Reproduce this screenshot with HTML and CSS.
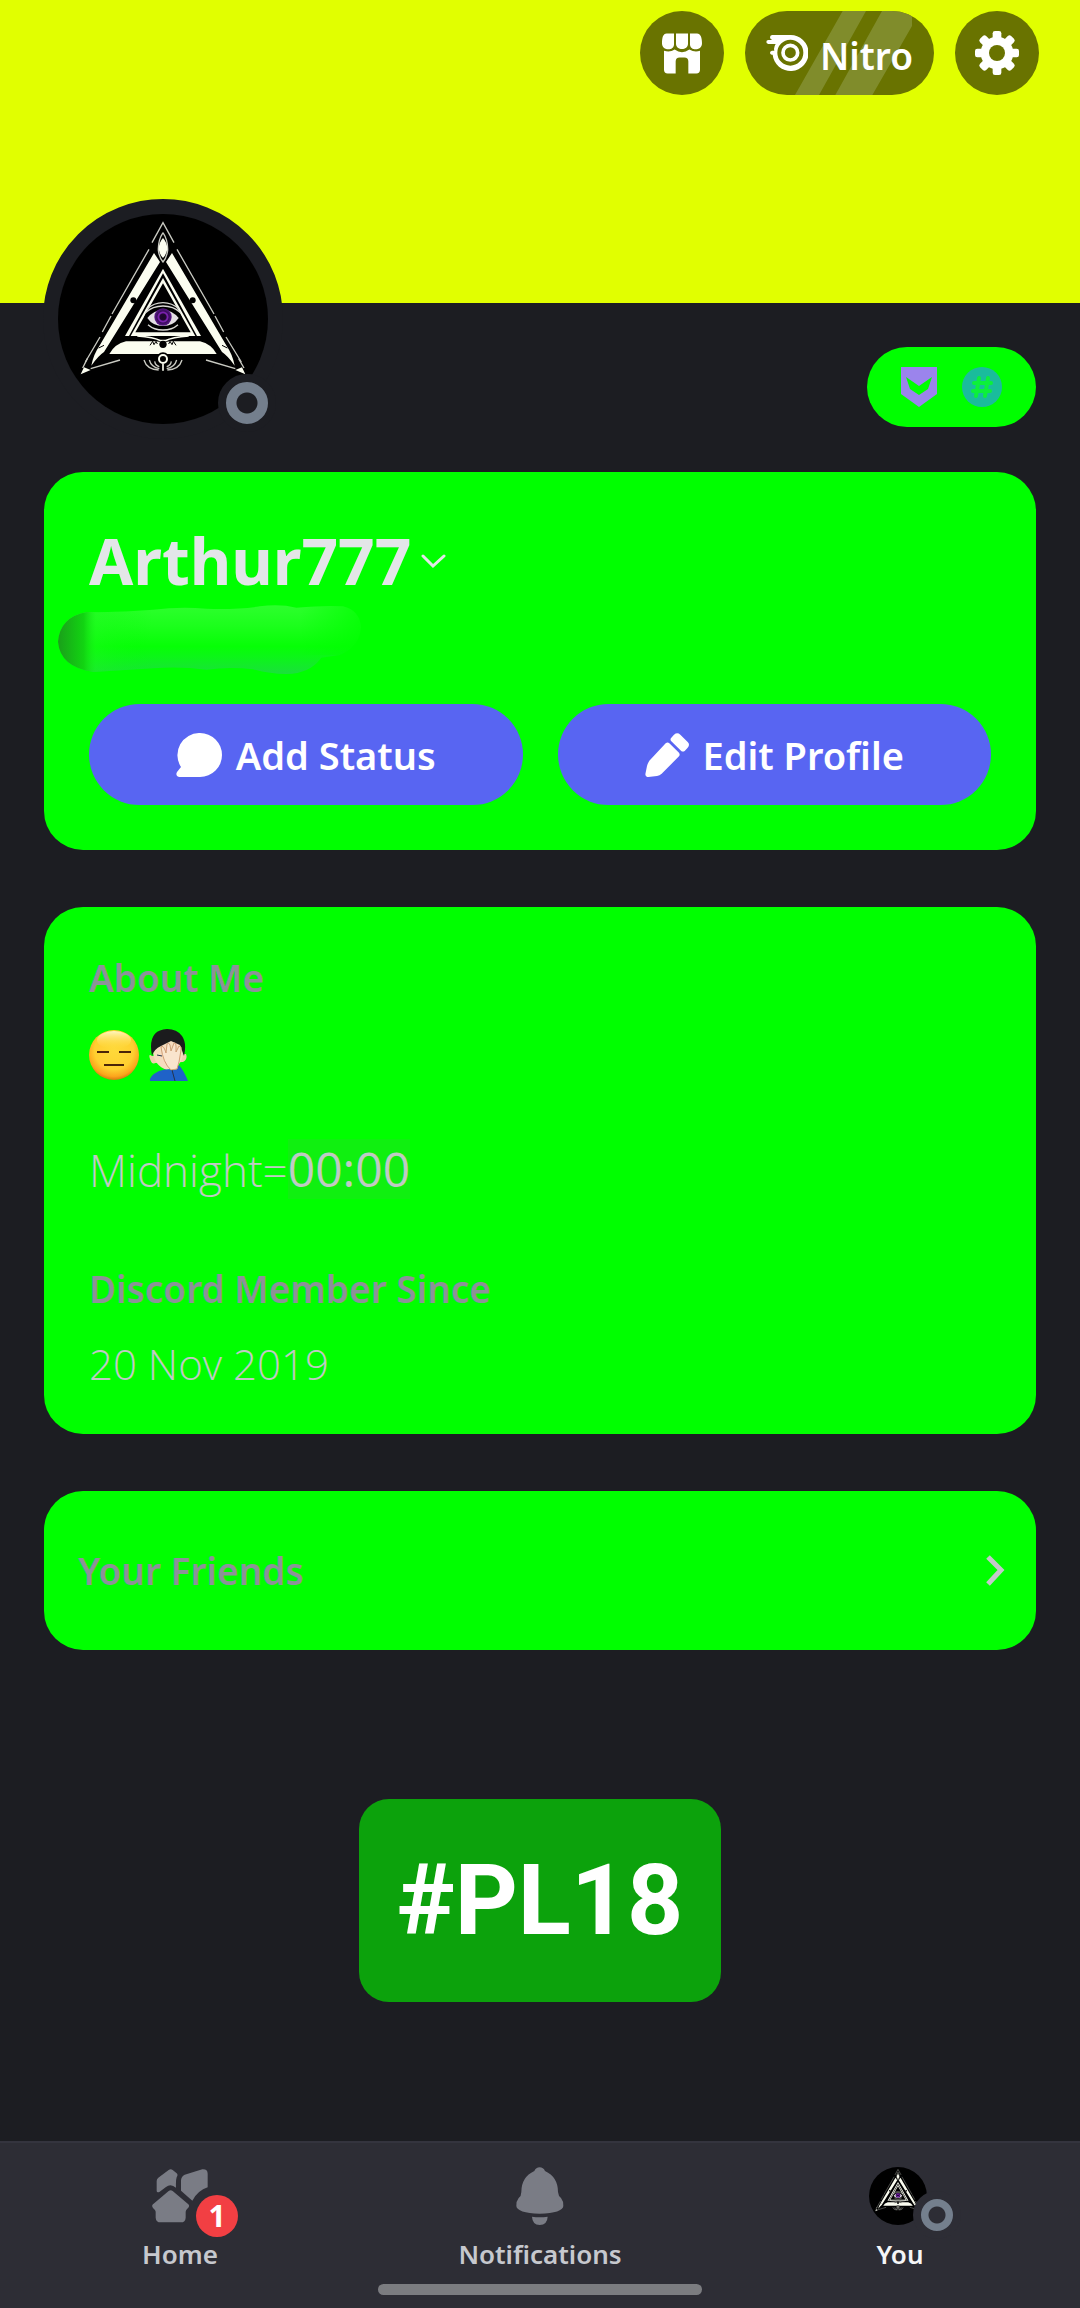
FILE: index.html
```html
<!DOCTYPE html>
<html lang="en">
<head>
<meta charset="utf-8">
<meta name="viewport" content="width=device-width, initial-scale=1">
<title>You</title>
<link rel="stylesheet" href="styles.css">
</head>
<body>
<svg class="sprite" aria-hidden="true">
  <defs>
    <radialGradient id="iris"><stop offset="0" stop-color="#1a0628"/><stop offset=".35" stop-color="#210733"/><stop offset=".5" stop-color="#7a1fb0"/><stop offset=".7" stop-color="#3a0c5c"/><stop offset="1" stop-color="#5c1a8a"/></radialGradient>
    <symbol id="avatar-art" viewBox="84 86 630 630">
      <circle cx="399" cy="401" r="315" fill="#000"/>
      <g fill="none" stroke="#c9cac2" stroke-width="4">
        <path d="M366 172 399 112 432 172"/>
        <path d="M357 192 246 386M243 392 217 440M210 455 166 530M441 192 552 386M555 392 581 440M588 455 634 530"/>
        <path d="M172 520 158 548M270 524 182 550M528 524 616 550M626 520 642 548"/>
        <path d="M399 142Q384 165 385 195 388 218 399 230 410 218 413 195 414 165 399 142"/>
        <path d="M342 524Q350 552 386 554M358 524Q364 546 388 550M374 528Q376 540 388 544M456 524Q448 552 412 554M440 524Q434 546 410 550M424 528Q422 540 410 544"/>
      </g>
      <g fill="#fbfdf0">
        <path d="M399 158Q412 172 412 192 408 210 399 218 390 210 386 192 386 172 399 158Z"/>
        <path d="M372 203 390 230 222 500Q204 512 184 541 190 508 208 482ZM426 203 408 230 576 500Q594 512 614 541 608 508 590 482Z"/>
        <path d="M288 468H510Q544 476 560 506H238Q254 476 288 468Z"/>
        <path d="M152 567 162 546 182 554ZM646 567 636 546 616 554Z"/>
      </g>
      <path d="M399 250 285 452H513Z" fill="#fbfdf0"/>
      <path d="M399 264 297 452H501Z" fill="#000"/>
      <path d="M399 278 302 452H496Z" fill="#fbfdf0"/>
      <path d="M399 294 316 441H482Z" fill="#000"/>
      <path d="M320 452H478L399 472Z" fill="#000"/>
      <path d="M322 452Q372 456 392 466H406Q426 456 476 452" fill="none" stroke="#fbfdf0" stroke-width="5"/>
      <path d="M342 398Q350 366 399 362 448 366 456 398 444 432 399 434 354 432 342 398Z" fill="#000"/>
      <path d="M350 372Q372 352 399 352 426 352 448 372M346 382Q368 362 399 362 430 362 452 382M354 418Q372 434 399 434 426 434 444 418" fill="none" stroke="#d9d9d4" stroke-width="4"/>
      <path d="M352 398Q372 374 399 374 426 374 446 398 430 422 399 422 368 422 352 398Z" fill="#e4e0e4"/>
      <circle cx="399" cy="395" r="26" fill="url(#iris)"/>
      <circle cx="399" cy="395" r="14" fill="none" stroke="#7a22ac" stroke-width="4"/>
      <g fill="#000"><circle cx="310" cy="345" r="9"/><circle cx="488" cy="345" r="9"/><circle cx="399" cy="477" r="11"/></g>
      <path d="M360 480 368 468 372 478 378 468 382 476M438 480 430 468 426 478 420 468 416 476M206 488 222 480M592 488 576 480" fill="none" stroke="#000" stroke-width="3"/>
      <circle cx="399" cy="521" r="20" fill="#000"/>
      <circle cx="399" cy="521" r="12" fill="none" stroke="#fbfdf0" stroke-width="6"/>
      <path d="M399 536V556" stroke="#fbfdf0" stroke-width="5"/>
    </symbol>
  </defs>
</svg>

<header class="banner">
  <button class="chip" aria-label="Shop">
    <svg width="40" height="41" viewBox="126 98 120 122" fill="#fff">
      <path d="M140 99H162V132C162 152 126 152 126 128 126 112 129 99 140 99ZM168 99H204V130C204 151 168 151 168 130ZM210 99H231C242 99 246 112 246 128 246 152 210 152 210 132Z"/>
      <path d="M132 151Q150 157 164 147 186 163 208 147 224 157 240 151V208Q240 219 229 219H205V183Q205 171 193 171H179Q167 171 167 183V219H143Q132 219 132 208Z"/>
    </svg>
  </button>
  <button class="chip chip-nitro">
    <svg class="shine" viewBox="375 33 567 252" aria-hidden="true"><path d="M668 33H738L597 285H525ZM786 33H876V78L757 285H646Z" fill="#808c2b"/></svg>
    <svg class="nitro-icon" width="42" height="36" viewBox="441 105 126 108" aria-hidden="true">
      <path fill="#fff" fill-rule="evenodd" d="M459 105H514A54 54 0 1 1 461 164H458Q453 163 453 158 453 153 459 152H466Q463 143 470 132H448Q442 131 442 126 442 120 448 120H460Q453 118 453 112 453 106 459 105ZM514 119A39 39 0 1 0 514 197 39 39 0 1 0 514 119Z"/>
      <circle cx="514" cy="158" r="22" fill="none" stroke="#fff" stroke-width="11"/>
    </svg>
    <span class="nitro-label">Nitro</span>
  </button>
  <button class="chip" aria-label="Settings">
    <svg width="44" height="44" viewBox="-66 -66 132 132">
      <g fill="#fff">
        <circle r="49"/>
        <g><rect x="-13" y="-66" width="26" height="132" rx="7"/><rect x="-66" y="-13" width="132" height="26" rx="7"/></g>
        <g transform="rotate(45)"><rect x="-13" y="-66" width="26" height="132" rx="7"/><rect x="-66" y="-13" width="132" height="26" rx="7"/></g>
      </g>
      <circle r="24" fill="#697300"/>
    </svg>
  </button>
</header>

<main class="profile">
  <div class="identity">
    <div class="avatar">
      <svg class="avatar-img" role="img" aria-label="Avatar"><use href="#avatar-art"/></svg>
      <span class="status"></span>
    </div>
    <div class="badges">
      <svg width="36" height="40" viewBox="0 0 36 40" role="img" aria-label="HypeSquad"><path fill="#9b84ec" fill-rule="evenodd" d="M0 0H36V27L18 40 0 27ZM5 10 9 22 18 28 27 22 31 10 18 19Z"/></svg>
      <svg width="40" height="40" viewBox="0 0 40 40" role="img" aria-label="Legacy username"><circle cx="20" cy="20" r="20" fill="#1abc9c"/><path d="M17 11 14 29M26 11 23 29M12 16H29M11 24H28" stroke="#0cf03a" stroke-width="4" fill="none" stroke-linecap="round"/></svg>
    </div>
  </div>

  <section class="card">
    <h1 class="name">Arthur777
      <svg width="25" height="15" viewBox="0 0 25 15" aria-hidden="true"><path d="M2 2 12 12 23 2" fill="none" stroke="#e3e6e8" stroke-width="3" stroke-linecap="round"/></svg>
    </h1>
    <svg class="smudge" viewBox="54 314 910 207" aria-hidden="true">
      <defs>
        <linearGradient id="edge" gradientUnits="userSpaceOnUse" x1="54" x2="340" y1="0" y2="0"><stop offset="0" stop-color="#1aa01a"/><stop offset=".27" stop-color="#12d412"/><stop offset=".4" stop-color="#1cf81c" stop-opacity=".4"/><stop offset="1" stop-color="#0f0" stop-opacity="0"/></linearGradient>
        <linearGradient id="body" x2="0" y2="1"><stop offset="0" stop-color="#2dff2d"/><stop offset=".3" stop-color="#1cff1c"/><stop offset=".6" stop-color="#06ff06"/><stop offset=".75" stop-color="#0cf618"/><stop offset="1" stop-color="#1ae03c"/></linearGradient>
        <linearGradient id="fade"><stop offset="0" stop-color="#0f0" stop-opacity="0"/><stop offset="1" stop-color="#0f0" stop-opacity=".75"/></linearGradient>
      </defs>
      <path id="blob" fill="url(#body)" d="M140 335Q240 337 340 328 420 318 500 325 590 328 660 318 720 310 770 322 860 314 910 318 960 330 964 380 960 440 900 464L845 472Q810 520 740 521 690 521 640 507 570 498 500 508 420 498 340 504L160 515Q60 500 54 424 60 350 140 335Z"/>
      <path fill="url(#edge)" d="M140 335Q240 337 340 328V504L160 515Q60 500 54 424 60 350 140 335Z"/>
      <rect x="780" y="314" width="184" height="150" fill="url(#fade)"/>
    </svg>
    <div class="actions">
      <button class="action">
        <svg width="46" height="44" viewBox="0 0 46 44" aria-hidden="true"><path fill="#fff" d="M24 0A22 22 0 0 1 24 44H3Q-1 43 1 39L5 34A22 22 0 0 1 24 0Z"/></svg>
        Add Status
      </button>
      <button class="action">
        <svg width="44" height="44" viewBox="48 53 132 132" aria-hidden="true"><g fill="#fff"><path d="M135 58Q145 50 154 58L176 80Q184 88 176 97L167 107Q161 111 156 106L127 78Q122 72 127 67Z"/><path d="M110 84Q116 79 121 84L150 112Q154 118 150 123L98 175Q92 181 84 182L58 185Q49 186 49 177L54 152Q56 144 61 136Z"/></g></svg>
        Edit Profile
      </button>
    </div>
  </section>

  <section class="card">
    <h2 class="heading">About Me</h2>
    <p class="emoji">
      <svg width="50" height="52" viewBox="0 0 50 52" role="img" aria-label="Expressionless face">
        <defs>
          <radialGradient id="face" cx=".5" cy=".4" r=".6"><stop offset="0" stop-color="#ffd93a"/><stop offset=".65" stop-color="#ffcf30"/><stop offset=".88" stop-color="#fca51c"/><stop offset="1" stop-color="#d87a10"/></radialGradient>
          <linearGradient id="gloss" x2="0" y2="1"><stop offset="0" stop-color="#fff6c0"/><stop offset="1" stop-color="#ffdc40" stop-opacity="0"/></linearGradient>
        </defs>
        <circle cx="25" cy="26" r="25" fill="url(#face)"/><ellipse cx="25" cy="11" rx="17" ry="9" fill="url(#gloss)"/>
        <path d="M8 23H20M30 23H42M15 36H35" stroke="#4a2508" stroke-width="2"/>
      </svg>
      <svg width="40" height="52" viewBox="0 0 40 52" role="img" aria-label="Facepalm">
        <path d="M3 27Q-1 24 1 30 3 36 6 34L34 33Q39 30 37 25" fill="#f0cfae"/>
        <path d="M4 22Q4 8 18 7 34 8 34 24 33 39 18 41 5 37 4 22Z" fill="#f6dcbf"/>
        <path d="M3 27Q-2 1 18 0 28 0 33 7 38 14 35 27L31 16 22 12 12 17Q5 20 3 27Z" fill="#1b1b1d"/>
        <path d="M1 52Q0 47 10 42 18 39 25 41L30 36Q35 42 39 52Z" fill="#1f62c8"/>
        <path d="M12 18Q14 16 16 21L17 24 18 15Q20 13 21 16L22 22 25 14Q27 13 27 17V23L30 17Q33 17 32 21L30 33 28 40 22 41Q14 34 12 18Z" fill="#f9e4cd" stroke="#cf9f76" stroke-width="1"/>
        <path d="M8 26 13 27M23 41 26 52" stroke="#24344f" stroke-width="1" fill="none"/>
      </svg>
    </p>
    <p class="bio">Midnight=<time class="stamp">00:00</time></p>
    <h2 class="heading since">Discord Member Since</h2>
    <p class="date">20 Nov 2019</p>
  </section>

  <a class="card friends" href="#friends">
    <span class="heading">Your Friends</span>
    <svg width="22" height="34" viewBox="0 0 22 34" aria-hidden="true"><path d="M4 3 17 16 4 30" fill="none" stroke="#c3c8ca" stroke-width="5"/></svg>
  </a>

  <div class="tag">#PL18</div>
</main>

<nav class="tabs">
  <a class="tab" href="#home">
    <span class="tab-icon">
      <svg width="56" height="54" viewBox="94 122 168 162" fill="#7a7c85" aria-hidden="true">
        <path d="M108 158Q108 152 113 148L144 125Q150 120 156 125L168 135Q173 139 168 147 165 155 166 178 150 164 136 176L116 191Q108 194 108 187Z"/>
        <path d="M181 156Q182 144 192 139L245 123Q261 122 261 136V177Q232 186 215 217L181 187Z"/>
        <path d="M144 188Q150 183 156 188L203 228Q209 234 200 241 196 244 195 250V268Q194 282 181 282H120Q106 282 105 268V250Q104 244 99 241 91 234 97 228Z"/>
      </svg>
      <span class="count">1</span>
    </span>
    Home
  </a>
  <a class="tab" href="#notifications">
    <span class="tab-icon">
      <svg width="48" height="58" viewBox="1190 115 144 174" fill="#7a7c85" aria-hidden="true">
        <path d="M1245 127Q1250 116 1261 116 1272 116 1277 127 1316 145 1316 190 1317 202 1325 208 1333 218 1332 232 1330 253 1261 255 1193 253 1191 232 1190 218 1198 208 1206 202 1206 190 1206 145 1245 127Z"/>
        <path d="M1238 264Q1261 267 1285 264 1284 288 1261 289 1239 288 1238 264Z"/>
      </svg>
    </span>
    Notifications
  </a>
  <a class="tab tab-current" href="#you" aria-current="page">
    <span class="tab-icon">
      <svg class="tab-avatar" role="img" aria-label="Avatar"><use href="#avatar-art"/></svg>
      <span class="status status-small"></span>
    </span>
    You
  </a>
  <span class="grip"></span>
</nav>
</body>
</html>
```
FILE: styles.css
```css
* {
  box-sizing: border-box;
}

body {
  margin: 0;
  min-height: 100vh;
  display: flex;
  flex-direction: column;
  background: #1c1d22;
  color: #fff;
  font-family: "Noto Sans", sans-serif;
}

h1, h2, p {
  margin: 0;
}

button {
  border: 0;
  padding: 0;
  color: inherit;
  font: inherit;
}

a {
  color: inherit;
  text-decoration: none;
}

svg {
  display: block;
  flex: none;
}

.sprite {
  position: absolute;
  width: 0;
  height: 0;
}

/* Banner */

.banner {
  height: 303px;
  padding: 11px 41px;
  display: flex;
  justify-content: flex-end;
  align-items: flex-start;
  gap: 21px;
  background: #e1ff00;
}

.chip {
  width: 84px;
  height: 84px;
  border-radius: 42px;
  display: flex;
  align-items: center;
  justify-content: center;
  background: #697300;
}

.chip-nitro {
  position: relative;
  width: 189px;
  gap: 12px;
  overflow: hidden;
  font-size: 37px;
  font-weight: 600;
}

.shine {
  position: absolute;
  inset: 0;
  width: 100%;
  height: 100%;
}

.nitro-icon,
.nitro-label {
  position: relative;
}

.nitro-label {
  padding-top: 4px;
}

/* Profile */

.profile {
  padding: 0 44px;
  display: flex;
  flex-direction: column;
  gap: 57px;
}

.identity {
  height: 112px;
  display: flex;
  justify-content: space-between;
  align-items: flex-end;
}

.avatar {
  position: relative;
  width: 240px;
  height: 240px;
  margin: 0 0 -24px -1px;
  border: 15px solid #1c1d22;
  border-radius: 50%;
  background: #1c1d22;
}

.avatar-img {
  width: 210px;
  height: 210px;
}

.status {
  position: absolute;
  right: -8px;
  bottom: -8px;
  width: 58px;
  height: 58px;
  border: 8px solid #1c1d22;
  border-radius: 50%;
  background: radial-gradient(circle, #1c1d22 10px, #747f8d 11px);
}

.badges {
  width: 169px;
  height: 80px;
  margin-bottom: -12px;
  border-radius: 40px;
  display: flex;
  align-items: center;
  justify-content: center;
  gap: 25px;
  background: #0f0;
}

.card {
  padding: 45px;
  border-radius: 39px;
  background: #0f0;
}

.name {
  display: flex;
  align-items: center;
  gap: 10px;
  color: #e3e6e8;
  font-size: 64px;
  font-weight: 700;
  line-height: 88px;
}

.smudge {
  width: 303px;
  height: 69px;
  margin: 0 0 30px -31px;
}

.actions {
  display: grid;
  grid-template-columns: 1fr 1fr;
  gap: 35px;
}

.action {
  height: 101px;
  border-radius: 51px;
  display: flex;
  align-items: center;
  justify-content: center;
  gap: 14px;
  background: #5865f2;
  font-size: 38px;
  font-weight: 600;
}

.heading {
  color: #8c9298;
  font-size: 37px;
  font-weight: 600;
  line-height: 52px;
}

.emoji {
  height: 54px;
  margin-top: 24px;
  display: flex;
  align-items: center;
  gap: 10px;
}

.bio,
.date {
  color: #c0cac4;
  font-family: "Open Sans", "Noto Sans", sans-serif;
  font-weight: 350;
}

.bio {
  margin-top: 57px;
  font-size: 44px;
  line-height: 60px;
}

.stamp {
  display: inline-block;
  background: #10f010;
  font-size: 48px;
  font-weight: 400;
}

.since {
  margin-top: 63px;
}

.date {
  margin-top: 24px;
  font-size: 42px;
  line-height: 50px;
}

.friends {
  height: 159px;
  padding: 0 30px 0 34px;
  display: flex;
  align-items: center;
  justify-content: space-between;
}

.tag {
  align-self: center;
  margin-top: 92px;
  padding: 0 38px;
  border-radius: 30px;
  background: #0ca20c;
  font-family: Roboto, sans-serif;
  font-size: 98px;
  font-weight: 700;
  line-height: 203px;
}

/* Tab bar */

.tabs {
  position: relative;
  height: 167px;
  margin-top: auto;
  padding-top: 22px;
  border-top: 2px solid #34343e;
  display: grid;
  grid-template-columns: 1fr 1fr 1fr;
  background: #2d2d35;
}

.tab {
  display: flex;
  flex-direction: column;
  align-items: center;
  gap: 8px;
  color: #c6c8ce;
  font-size: 26px;
  font-weight: 600;
  line-height: 38px;
}

.tab-current {
  color: #f4f5f7;
}

.tab-icon {
  position: relative;
  width: 62px;
  height: 62px;
  display: flex;
  align-items: center;
  justify-content: center;
}

.tab-current .tab-icon {
  justify-content: flex-start;
}

.tab-avatar {
  width: 58px;
  height: 58px;
}

.count {
  position: absolute;
  left: 47px;
  top: 30px;
  width: 42px;
  height: 42px;
  border-radius: 50%;
  background: #f23f43;
  color: #fff;
  font-size: 30px;
  font-weight: 700;
  line-height: 42px;
  text-align: center;
}

.status-small {
  right: -30px;
  bottom: -12px;
  width: 48px;
  height: 48px;
  border-color: #2d2d35;
  background: radial-gradient(circle, #2d2d35 8px, #747f8d 9px);
}

.grip {
  position: absolute;
  left: 35%;
  bottom: 13px;
  width: 30%;
  height: 11px;
  border-radius: 6px;
  background: #7b7c80;
}
```
